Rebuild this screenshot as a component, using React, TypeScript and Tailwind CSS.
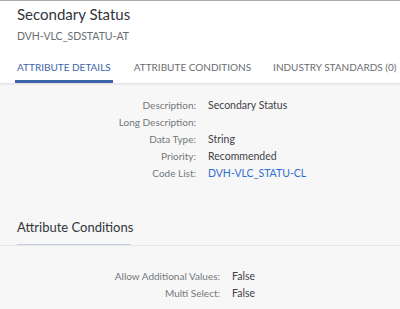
// Attribute detail page: header with tabs, detail form and conditions section

const details: [string, string, boolean?][] = [
  ['Description:', 'Secondary Status'],
  ['Long Description:', ''],
  ['Data Type:', 'String'],
  ['Priority:', 'Recommended'],
  ['Code List:', 'DVH-VLC_STATU-CL', true],
]

const conditions: [string, string][] = [
  ['Allow Additional Values:', 'False'],
  ['Multi Select:', 'False'],
]

function Row({ label, value, link, labelWidth }: { label: string; value: string; link?: boolean; labelWidth: string }) {
  return (
    <div className="flex h-[17px] items-center whitespace-nowrap">
      <span className={`${labelWidth} shrink-0 text-right text-[10px] text-[#74777a]`}>{label}</span>
      <span className={`pl-[12px] text-[10.5px] ${link ? 'text-[#2f6fd1]' : 'text-[#3f4245]'}`}>{value}</span>
    </div>
  )
}

export default function App() {
  return (
    <div className="h-[309px] w-[400px] overflow-hidden bg-[#f7f7f7] font-['Lato',sans-serif]">
      <header className="border-t border-[#a9a9a9] bg-white shadow-[0_1px_2px_rgba(0,0,0,0.12)]">
        <h1 className="pl-[17px] pt-[3px] text-[15px] leading-[20px] text-[#32363a]">Secondary Status</h1>
        <p className="pl-[17px] pt-[5px] text-[10.5px] leading-[14px] text-[#6a6d70]">DVH-VLC_SDSTATU-AT</p>
        <nav className="mt-[17px] flex whitespace-nowrap pl-[15px] text-[10px] leading-[14px] text-[#6a6d70]">
          <span className="border-b-[3px] border-[#3e64a8] px-[2px] pb-[6px] text-[#3e64a8]">ATTRIBUTE DETAILS</span>
          <span className="ml-[19px] px-[2px] pb-[6px]">ATTRIBUTE CONDITIONS</span>
          <span className="ml-[18px] px-[2px] pb-[6px]">INDUSTRY STANDARDS (0)</span>
        </nav>
      </header>

      <section className="pt-[14px]">
        {details.map(([label, value, link]) => (
          <Row key={label} label={label} value={value} link={link} labelWidth="w-[196px]" />
        ))}
      </section>

      <section className="mt-[36px]">
        <div className="border-b border-[#e5e5e5]">
          <h2 className="ml-[17px] w-[113px] whitespace-nowrap border-b border-[#c3cde0] pb-[8px] text-[13px] leading-[18px] text-[#32363a]">
            Attribute Conditions
          </h2>
        </div>
        <div className="pt-[22px]">
          {conditions.map(([label, value]) => (
            <Row key={label} label={label} value={value} labelWidth="w-[220px]" />
          ))}
        </div>
      </section>
    </div>
  )
}
